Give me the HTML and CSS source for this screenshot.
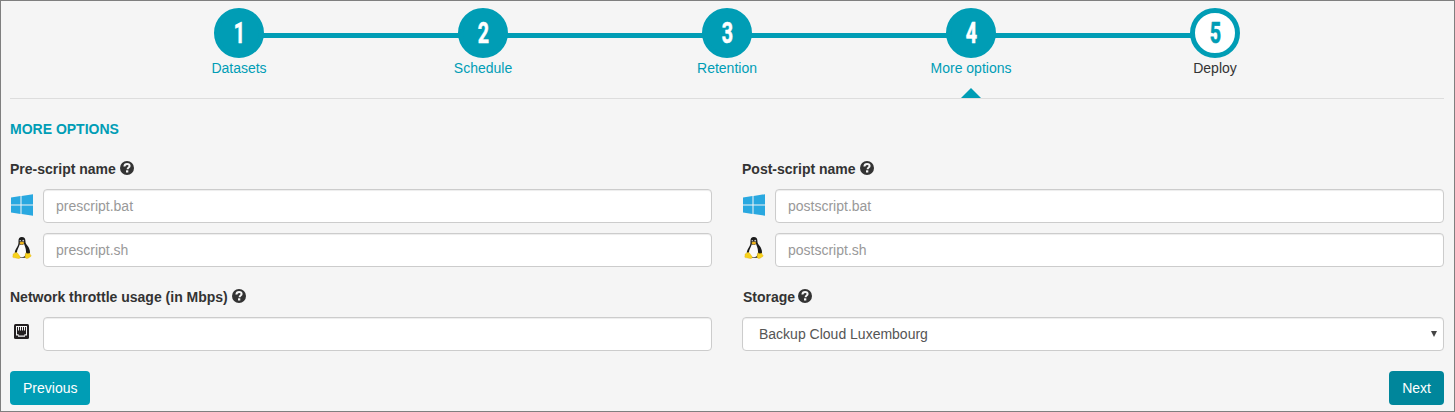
FILE: index.html
```html
<!DOCTYPE html>
<html lang="en">
<head>
<meta charset="utf-8">
<title>More options</title>
<link rel="stylesheet" href="styles.css">
</head>
<body>
<svg class="defs" width="0" height="0" aria-hidden="true">
  <symbol id="help" viewBox="0 0 14 14">
    <circle cx="7" cy="7" r="7" fill="#333"/>
    <path d="M4.400 5.500C4.500 3.700 5.500 3 7.100 3c1.600 0 2.500.8 2.500 2 0 1.600-2 1.500-2 3.200" fill="none" stroke="#f5f5f5" stroke-width="2"/>
    <path d="M6 9.300h2.300v2.200H6z" fill="#f5f5f5"/>
  </symbol>
  <symbol id="windows" viewBox="0 0 22 22">
    <path fill="#29a8e0" d="M0 3.400 9.500 2v8.400H0zM10.500 1.900 22 .2v10.200H10.500zM0 11.500h9.500v8.400L0 18.600zM10.500 11.500H22v10.200L10.500 20z"/>
  </symbol>
  <symbol id="tux" viewBox="0 0 20 22">
    <path fill="#1c1c1c" d="M9.800 0c2.600 0 3.700 1.700 3.600 4 0 2.100.9 3.300 2.300 5 1.700 2.200 2.900 5.500 2 8.200l-2.500 3.500H6L2.800 16.400c-.2-2 1-4 2-5.800C6 8.500 6.600 7 6.500 4.700 6.300 1.800 7.400 0 9.800 0z"/>
    <path fill="#fafafa" d="M7.800 7.300c1 .7 2.700.9 4.300-.3.600 1.800 1.800 4.200 1.900 7.200.1 2.200-.4 4.100-1.600 5.400-1.500.9-3.400.9-4.900.2-1.500-1.200-2.500-2.800-2.600-4.100C4.900 13 7.100 10 7.800 7.300z"/>
    <circle cx="8.300" cy="3.700" r=".8" fill="#ccc"/><circle cx="11.200" cy="3.700" r=".9" fill="#ccc"/>
    <path fill="#efb51e" d="M7.600 5.600 9.700 4.400l2.500 1.200-.4 1.200-2 1-2-1z"/>
    <path fill="#f8d21c" stroke="#d9a514" stroke-width=".3" d="M1.300 16.700c1.400.100 1.700-1.600 3-1.400 1.500.500 2.500 2.800 3.800 4.300.500 1.500-.700 2.200-2 2-1.500-.200-3.300-1-4.900-1-.900-.500-.200-1.500-.200-2.300 0-.600-.200-1.100.3-1.600zM14.300 15.700c.400 1 1.800 1.300 3 .2.900.2.700 1.400 1.200 2 .800.600 1.200.9.400 1.500-1.500.700-2.300 1.900-3.700 2.200-1.500.100-2.300-.9-2.100-2.300.300-1.300 0-3.300 1.200-3.600z"/>
  </symbol>
</svg>
<main class="wizard">
  <ol class="steps">
    <li class="step"><span class="circle"><b>1</b></span><span>Datasets</span></li>
    <li class="step"><span class="circle"><b>2</b></span><span>Schedule</span></li>
    <li class="step"><span class="circle"><b>3</b></span><span>Retention</span></li>
    <li class="step current"><span class="circle"><b>4</b></span><span>More options</span></li>
    <li class="step pending"><span class="circle"><b>5</b></span><span>Deploy</span></li>
  </ol>
  <h2 class="title">MORE OPTIONS</h2>
  <form class="form">
    <section class="group">
      <h3 class="label">Pre-script name <svg class="help"><use href="#help"/></svg></h3>
      <div class="row"><svg class="windows"><use href="#windows"/></svg><input class="control" placeholder="prescript.bat"></div>
      <div class="row"><svg class="tux"><use href="#tux"/></svg><input class="control" placeholder="prescript.sh"></div>
    </section>
    <section class="group">
      <h3 class="label">Post-script name <svg class="help"><use href="#help"/></svg></h3>
      <div class="row"><svg class="windows"><use href="#windows"/></svg><input class="control" placeholder="postscript.bat"></div>
      <div class="row"><svg class="tux"><use href="#tux"/></svg><input class="control" placeholder="postscript.sh"></div>
    </section>
    <section class="group">
      <h3 class="label">Network throttle usage (in Mbps) <svg class="help"><use href="#help"/></svg></h3>
      <div class="row">
        <svg class="port" viewBox="0 0 15 15">
          <rect width="15" height="15" rx="1.500" fill="#231f20"/>
          <path d="M2 2h11v9.500h-2v1.300H4v-1.300H2z" fill="#f5f5f5"/>
          <path d="M3 3h9v7.200h-1.600v1.400H4.600v-1.400H3z" fill="#231f20"/>
          <path d="M4.500 2.500v4M6.500 2.500v4M8.500 2.500v4M10.500 2.500v4" stroke="#f5f5f5" stroke-width="1"/>
        </svg>
        <input class="control">
      </div>
    </section>
    <section class="group">
      <h3 class="label storage">Storage <svg class="help"><use href="#help"/></svg></h3>
      <div class="control select"><span>Backup Cloud Luxembourg</span><svg class="caret" viewBox="0 0 6 6"><path d="M0 0h6L3 6z" fill="#444"/></svg></div>
    </section>
  </form>
  <footer class="actions"><button class="btn">Previous</button><button class="btn active">Next</button></footer>
</main>
</body>
</html>
```
FILE: styles.css
```css
* { box-sizing: border-box; }
body {
  margin: 0;
  font: 14px/20px "Liberation Sans", Arial, sans-serif;
  color: #333;
}
.defs { position: absolute; }
.wizard {
  height: 412px;
  padding: 7px 10px 0 9px;
  overflow: hidden;
  background: #f5f5f5;
  border: 1px solid #7f7f7f;
}
.steps {
  display: grid;
  grid-template-columns: repeat(5, 244px);
  height: 91px;
  margin: 0;
  padding: 0 0 0 107px;
  list-style: none;
  border-bottom: 1px solid #ddd;
}
.step {
  position: relative;
  display: flex;
  flex-direction: column;
  align-items: center;
  color: #009db5;
}
.step + .step::before {
  content: "";
  position: absolute;
  top: 25px;
  right: 50%;
  width: 100%;
  height: 5px;
  background: #009db5;
}
.circle {
  position: relative;
  z-index: 1;
  display: flex;
  align-items: center;
  justify-content: center;
  width: 50px;
  height: 50px;
  border: 5px solid #009db5;
  border-radius: 50%;
  background: #009db5;
  color: #fff;
}
.circle b {
  font: bold 29px/40px Roboto, sans-serif;
  transform: scaleX(.68);
  -webkit-text-stroke: .6px currentColor;
}
.pending { color: #333; }
.pending .circle { background: #fff; color: #009db5; }
.current::after {
  content: "";
  margin-top: 10px;
  border: 10px solid transparent;
  border-top: 0;
  border-bottom-color: #009db5;
}
.title {
  margin: 20px 0;
  font-size: 14px;
  line-height: 20px;
  color: #009db5;
}
.form {
  display: grid;
  grid-template-columns: 702px 702px;
  column-gap: 30px;
  row-gap: 20px;
}
.group { display: flex; flex-direction: column; gap: 10px; }
.label {
  display: flex;
  align-items: center;
  gap: 4px;
  height: 20px;
  margin: 0;
  font-size: 14px;
}
.storage { gap: 3px; padding-left: 1px; }
.help { width: 14px; height: 14px; margin-top: -2px; }
.row { display: flex; height: 34px; }
.windows { width: 22px; height: 22px; margin: 5px 10px 0 1px; }
.tux { width: 20px; height: 22px; margin: 4px 11px 0 2px; }
.port { width: 15px; height: 15px; margin: 7px 14px 0 4px; }
.control {
  flex: 1;
  min-width: 0;
  height: 34px;
  padding: 6px 12px;
  font: inherit;
  color: #555;
  background: #fff;
  border: 1px solid #ccc;
  border-radius: 4px;
  box-shadow: inset 0 1px 1px rgba(0, 0, 0, .075);
}
.control::placeholder { color: #999; opacity: 1; }
.select {
  display: flex;
  flex: none;
  align-items: center;
  justify-content: space-between;
  padding: 0 6px 0 16px;
}
.caret { width: 6px; height: 6px; }
.actions { display: flex; justify-content: space-between; margin-top: 20px; }
.btn {
  height: 34px;
  padding: 0 13px;
  font: inherit;
  color: #fff;
  background: #009db5;
  border: 0;
  border-radius: 4px;
}
.active { background: #00869b; }
```
